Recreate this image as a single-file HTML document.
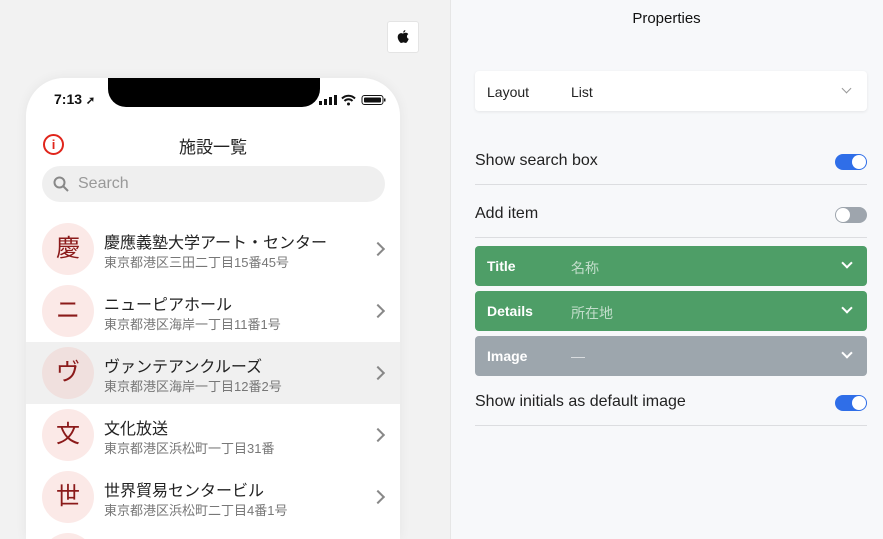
<!DOCTYPE html>
<html style="width:883px;height:539px;overflow:hidden"><head><meta charset="utf-8"><style>
*{box-sizing:border-box;margin:0;padding:0}
body{width:883px;height:539px;overflow:hidden;background:#f2f2f2;font-family:"Liberation Sans","Noto Sans CJK JP",sans-serif;position:relative}
.abs{position:absolute}
.right{left:450px;top:0;width:433px;height:539px;background:#f7f8fa;border-left:1px solid #e6e6e6}
.phone{left:26px;top:78px;width:374px;height:461px;background:#fff;border-radius:38px 38px 0 0;overflow:hidden;box-shadow:0 0 12px rgba(0,0,0,.06)}
.notch{left:82px;top:0;width:212px;height:29px;background:#000;border-radius:0 0 18px 18px}
.row{position:absolute;left:0;width:374px;height:62px}
.circ{position:absolute;left:16px;top:5px;width:52px;height:52px;border-radius:50%;background:#fbe9e7;color:#8b1a1a;font-size:24px;text-align:center;line-height:52px}
.t{position:absolute;left:78px;top:11px;font-size:16px;color:#222}
.d{position:absolute;left:78px;top:34px;font-size:13px;color:#777}
.chev{position:absolute;left:347px;top:26px;width:10px;height:10px;border-right:2px solid #888;border-top:2px solid #888;transform:rotate(45deg)}
.sel{position:absolute;left:475px;width:392px;height:40px;border-radius:4px}
.sel .l{position:absolute;left:12px;top:12px;font-size:14px;font-weight:bold;color:#fff}
.sel .v{position:absolute;left:96px;top:12px;font-size:14px;color:rgba(255,255,255,.65)}
.sel .c{position:absolute;right:16px;top:13px;width:8px;height:8px;border-right:2px solid #fff;border-bottom:2px solid #fff;transform:rotate(45deg)}
.lab{position:absolute;left:475px;font-size:16px;color:#222}
.line{position:absolute;left:475px;width:392px;height:1px;background:#dcdde0}
.tog{position:absolute;left:835px;width:32px;height:16px;border-radius:8px}
.tog i{position:absolute;top:1px;width:14px;height:14px;border-radius:50%;background:#fff}
</style></head><body>
<div class="abs" style="left:387px;top:21px;width:32px;height:32px;background:#fff;border:1px solid #e4e4e4;border-radius:3px">
<svg class="abs" style="left:8px;top:7px" width="14" height="16" viewBox="0 0 14 16"><path d="M7 4.5C8 4 9 3.6 10 3.8c1 .1 1.8.6 2.3 1.3-2 1.2-1.7 4 .4 4.8-.4 1.2-1 2.3-1.7 3.2-.7.9-1.400 1-2.3.6-.9-.4-1.6-.4-2.5 0-1 .4-1.6.3-2.3-.6C2 11 1 8 2.3 5.8 3 4.6 4.2 4 5.4 4.1 6 4.2 6.5 4.5 7 4.5z" fill="#111"/><path d="M7.2 3.6C7.1 2.4 8 1.2 9.3 1c.1 1.3-.9 2.6-2.1 2.6z" fill="#111"/></svg></div>
<div class="abs phone">
<div class="abs notch"></div>
<div class="abs" style="left:28px;top:13px;font-size:14px;font-weight:bold;color:#111">7:13 <span style="font-size:11px">➚</span></div>
<svg class="abs" style="left:293px;top:16px" width="70" height="12"><rect x="0" y="7" width="3" height="4" fill="#111"/><rect x="5" y="5" width="3" height="6" fill="#111"/><rect x="10" y="3" width="3" height="8" fill="#111"/><rect x="15" y="1" width="3" height="10" fill="#111"/><path d="M23 4.5a9 9 0 0 1 13 0M25.5 7a5.5 5.5 0 0 1 8 0" stroke="#111" stroke-width="2" fill="none"/><circle cx="29.5" cy="10" r="1.5" fill="#111"/><rect x="43" y="1.5" width="21" height="9" rx="2.5" stroke="#111" fill="none"/><rect x="45" y="3.5" width="17" height="5" rx="1" fill="#111"/><rect x="65" y="4.5" width="1.5" height="3" fill="#111"/></svg>
<div class="abs" style="left:17px;top:56px;width:21px;height:21px;border:2px solid #e0251b;border-radius:50%;color:#e0251b;font-size:13px;text-align:center;line-height:17px;font-weight:bold">i</div>
<div class="abs" style="left:0;width:374px;top:55px;text-align:center;font-size:17px;color:#222">施設一覧</div>
<div class="abs" style="left:16px;top:88px;width:343px;height:36px;background:#efefef;border-radius:18px">
<svg class="abs" style="left:11px;top:10px" width="16" height="16"><circle cx="6.5" cy="6.5" r="5" stroke="#888" stroke-width="2" fill="none"/><path d="M10 10l5 5" stroke="#888" stroke-width="2"/></svg>
<div class="abs" style="left:36px;top:9px;font-size:16px;color:#999">Search</div></div>
<div class="row" style="top:140px"><div class="circ">慶</div><div class="t">慶應義塾大学アート・センター</div><div class="d">東京都港区三田二丁目15番45号</div><div class="chev"></div></div>
<div class="row" style="top:202px"><div class="circ">ニ</div><div class="t">ニューピアホール</div><div class="d">東京都港区海岸一丁目11番1号</div><div class="chev"></div></div>
<div class="row" style="top:264px;background:#f0f0f0"><div class="circ" style="background:#f0e0de">ヴ</div><div class="t">ヴァンテアンクルーズ</div><div class="d">東京都港区海岸一丁目12番2号</div><div class="chev"></div></div>
<div class="row" style="top:326px"><div class="circ">文</div><div class="t">文化放送</div><div class="d">東京都港区浜松町一丁目31番</div><div class="chev"></div></div>
<div class="row" style="top:388px"><div class="circ">世</div><div class="t">世界貿易センタービル</div><div class="d">東京都港区浜松町二丁目4番1号</div><div class="chev"></div></div>
<div class="row" style="top:450px"><div class="circ"></div></div>
</div>
<div class="abs right"></div>
<div class="abs" style="left:450px;width:433px;top:10px;text-align:center;font-size:15px;color:#111">Properties</div>
<div class="abs" style="left:475px;top:71px;width:392px;height:40px;background:#fff;border-radius:4px;box-shadow:0 1px 3px rgba(0,0,0,.08)">
<div class="abs" style="left:12px;top:13px;font-size:14px;color:#222">Layout</div>
<div class="abs" style="left:96px;top:13px;font-size:14px;color:#222">List</div>
<div class="abs" style="right:17px;top:14px;width:7px;height:7px;border-right:1.5px solid #999;border-bottom:1.5px solid #999;transform:rotate(45deg)"></div></div>
<div class="lab" style="top:152px">Show search box</div>
<div class="tog" style="top:154px;background:#2f6ee8"><i style="left:17px"></i></div>
<div class="line" style="top:184px"></div>
<div class="lab" style="top:205px">Add item</div>
<div class="tog" style="top:207px;background:#9ea5ad"><i style="left:1px"></i></div>
<div class="line" style="top:237px"></div>
<div class="sel" style="top:246px;background:#4e9e67"><div class="l">Title</div><div class="v">名称</div><div class="c"></div></div>
<div class="sel" style="top:291px;background:#4e9e67"><div class="l">Details</div><div class="v">所在地</div><div class="c"></div></div>
<div class="sel" style="top:336px;background:#9da6ad"><div class="l">Image</div><div class="v">—</div><div class="c"></div></div>
<div class="lab" style="top:393px">Show initials as default image</div>
<div class="tog" style="top:395px;background:#2f6ee8"><i style="left:17px"></i></div>
<div class="line" style="top:425px"></div>
</body></html>
